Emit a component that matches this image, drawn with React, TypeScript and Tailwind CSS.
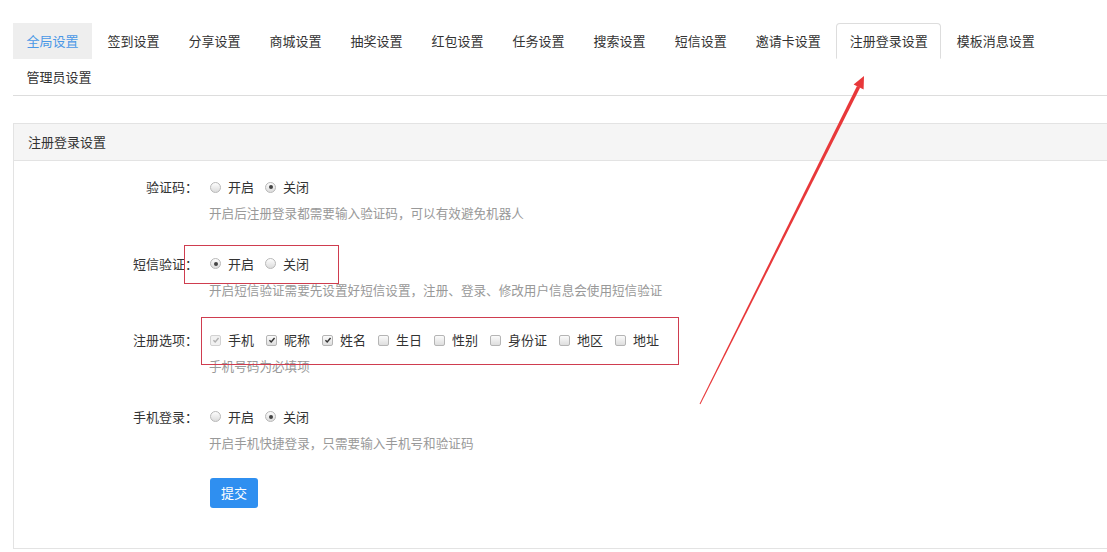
import React from "react"

const tabs = [
  "全局设置",
  "签到设置",
  "分享设置",
  "商城设置",
  "抽奖设置",
  "红包设置",
  "任务设置",
  "搜索设置",
  "短信设置",
  "邀请卡设置",
  "注册登录设置",
  "模板消息设置",
  "管理员设置",
]

function Radio({ checked, label }: { checked?: boolean; label: string }) {
  return (
    <label className="inline-flex items-center mr-[10px]">
      <span className="ml-[1px] mr-[7px] w-[11px] h-[11px] rounded-full border border-[#b8b8b8] bg-linear-to-b from-[#fdfdfd] to-[#dcdcdc] flex items-center justify-center">
        {checked && <span className="w-[4px] h-[4px] rounded-full bg-[#444]" />}
      </span>
      <span className="text-[#333]">{label}</span>
    </label>
  )
}

function Checkbox({ checked, disabled, label }: { checked?: boolean; disabled?: boolean; label: string }) {
  return (
    <label className="inline-flex items-center mr-[11px]">
      <span
        className={
          disabled
            ? "ml-[1px] mr-[7px] w-[11px] h-[11px] rounded-[2px] border border-[#d2d2d2] bg-[#f1f1f1] flex items-center justify-center"
            : "ml-[1px] mr-[7px] w-[11px] h-[11px] rounded-[2px] border border-[#b5b5b5] bg-linear-to-b from-[#fbfbfb] to-[#dedede] flex items-center justify-center"
        }
      >
        {checked && (
          <svg viewBox="0 0 10 10" className="w-[8px] h-[8px]">
            <path d="M1.8 5.2 L4 7.4 L8.2 2.4" fill="none" stroke={disabled ? "#b0b0b0" : "#333"} strokeWidth={1.8} />
          </svg>
        )}
      </span>
      <span className="text-[#333]">{label}</span>
    </label>
  )
}

function Row({ label, help, last, children }: { label: string; help: string; last?: boolean; children: React.ReactNode }) {
  return (
    <div className={last ? "flex mb-[25.5px]" : "flex mb-[30.5px]"}>
      <div className="w-[184px] text-right leading-[20px] text-[#333]">{label}：</div>
      <div className="ml-[11px] flex flex-col">
        <div className="flex items-center h-[20px] leading-[20px]">{children}</div>
        <div className="mt-[6px] leading-[20px] text-[12.6px] text-[#999]">{help}</div>
      </div>
    </div>
  )
}

export default function App() {
  return (
    <div className="relative w-full h-[552px] overflow-hidden bg-white text-[13px] font-['Noto_Sans_CJK_SC','Microsoft_YaHei',sans-serif]">
      <div className="w-[1120px] ml-[13px] pt-[23px]">
        {/* tabs */}
        <ul className="flex flex-wrap border-b border-[#dddddd]">
          {tabs.map((t, i) => (
            <li
              key={t}
              className={
                i === 0
                  ? "mr-[2px] px-[12.5px] py-[9px] leading-[16px] border border-transparent bg-[#eeeeee] text-[#4a98e6]"
                  : i === 10
                    ? "mr-[2px] px-[12.5px] py-[9px] leading-[16px] border border-[#dddddd] border-b-transparent rounded-t-[4px] bg-white text-[#333]"
                    : "mr-[2px] px-[12.5px] py-[9px] leading-[16px] border border-transparent text-[#333]"
              }
            >
              {t}
            </li>
          ))}
        </ul>

        {/* panel */}
        <div className="mt-[27px] border border-[#e3e3e3]">
          <div className="px-[14px] py-[10px] leading-[16px] bg-[#f5f5f5] border-b border-[#e3e3e3] text-[#333]">
            注册登录设置
          </div>
          <div className="pt-[16px] pb-[40px]">
            <Row label="验证码" help="开启后注册登录都需要输入验证码，可以有效避免机器人">
              <Radio label="开启" />
              <Radio label="关闭" checked />
            </Row>
            <Row label="短信验证" help="开启短信验证需要先设置好短信设置，注册、登录、修改用户信息会使用短信验证">
              <Radio label="开启" checked />
              <Radio label="关闭" />
            </Row>
            <Row label="注册选项" help="手机号码为必填项">
              <Checkbox label="手机" checked disabled />
              <Checkbox label="昵称" checked />
              <Checkbox label="姓名" checked />
              <Checkbox label="生日" />
              <Checkbox label="性别" />
              <Checkbox label="身份证" />
              <Checkbox label="地区" />
              <Checkbox label="地址" />
            </Row>
            <Row label="手机登录" help="开启手机快捷登录，只需要输入手机号和验证码" last>
              <Radio label="开启" />
              <Radio label="关闭" checked />
            </Row>
            <div className="flex">
              <div className="w-[184px]" />
              <button className="ml-[12px] w-[48px] h-[30px] rounded-[3px] bg-[#2f8ff0] text-white leading-[30px]">
                提交
              </button>
            </div>
          </div>
        </div>
      </div>

      {/* red annotations */}
      <div className="absolute left-[184px] top-[245px] w-[155px] h-[39px] border border-[#cf3d4f]" />
      <div className="absolute left-[201px] top-[317px] w-[478px] h-[48px] border border-[#cf3d4f]" />
      <svg className="absolute left-0 top-0 pointer-events-none" width="1107" height="552" viewBox="0 0 1107 552">
        <polygon points="700.45,404.22 699.55,403.78 857.0,85.9 860.2,87.5" fill="#e8383a" />
        <polygon points="864,76 863.6,89.4 853.6,84.4" fill="#e8383a" />
      </svg>
    </div>
  )
}
